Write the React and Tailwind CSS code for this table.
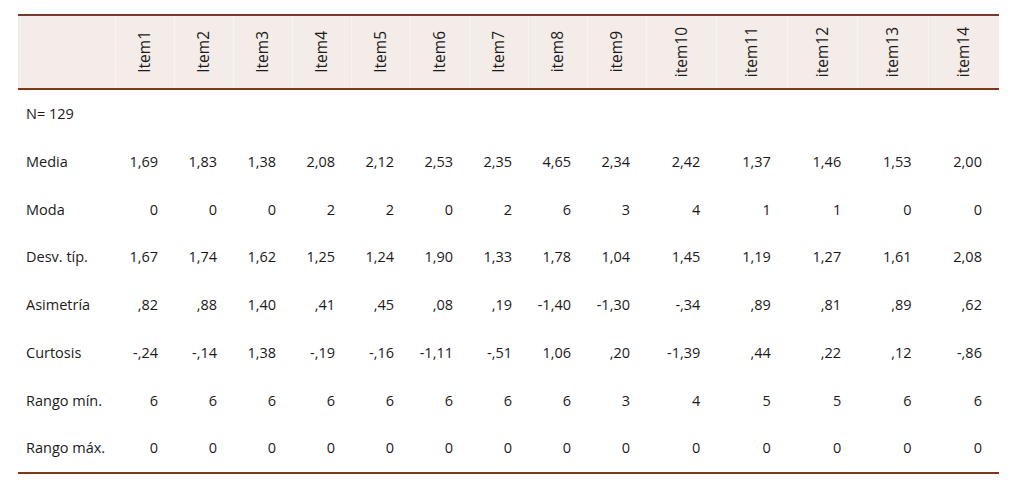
import React from "react";

const items = [
  "Item1", "Item2", "Item3", "Item4", "Item5", "Item6", "Item7",
  "item8", "item9", "item10", "item11", "item12", "item13", "item14",
];

const rows = [
  ["N= 129", []],
  ["Media", ["1,69", "1,83", "1,38", "2,08", "2,12", "2,53", "2,35", "4,65", "2,34", "2,42", "1,37", "1,46", "1,53", "2,00"]],
  ["Moda", ["0", "0", "0", "2", "2", "0", "2", "6", "3", "4", "1", "1", "0", "0"]],
  ["Desv. típ.", ["1,67", "1,74", "1,62", "1,25", "1,24", "1,90", "1,33", "1,78", "1,04", "1,45", "1,19", "1,27", "1,61", "2,08"]],
  ["Asimetría", [",82", ",88", "1,40", ",41", ",45", ",08", ",19", "-1,40", "-1,30", "-,34", ",89", ",81", ",89", ",62"]],
  ["Curtosis", ["-,24", "-,14", "1,38", "-,19", "-,16", "-1,11", "-,51", "1,06", ",20", "-1,39", ",44", ",22", ",12", "-,86"]],
  ["Rango mín.", ["6", "6", "6", "6", "6", "6", "6", "6", "3", "4", "5", "5", "6", "6"]],
  ["Rango máx.", ["0", "0", "0", "0", "0", "0", "0", "0", "0", "0", "0", "0", "0", "0"]],
];

const cols = "grid grid-cols-[98px_repeat(9,59px)_repeat(5,70.4px)]";

export default function App() {
  return (
    <div className="bg-white w-[1027px] h-[483px] pt-[14px] pl-[18px] font-['Open_Sans',sans-serif] text-[14.5px] text-[#1c1a1a]">
      <div className="w-[981px] border-t-2 border-b-2 border-[#7b3a1f]">
        <div className={cols + " h-[74px] bg-[#f3ece8] border-b-2 border-[#7b3a1f]"}>
          <div className="border-r border-white/40" />
          {items.map((it, i) => (
            <div
              key={it}
              className={
                "flex items-center justify-center text-[15.5px] " +
                (i < items.length - 1 ? "border-r border-white/40" : "")
              }
            >
              <span className="[writing-mode:vertical-rl] rotate-180 leading-none">{it}</span>
            </div>
          ))}
        </div>
        {rows.map(([label, vals]) => (
          <div key={label} className={cols + " h-[47.75px] items-center"}>
            <div className="pl-[8px] whitespace-nowrap">{label}</div>
            {vals.map((v, i) => (
              <div key={i} className="text-right pr-[17px]">
                {v}
              </div>
            ))}
          </div>
        ))}
      </div>
    </div>
  );
}
